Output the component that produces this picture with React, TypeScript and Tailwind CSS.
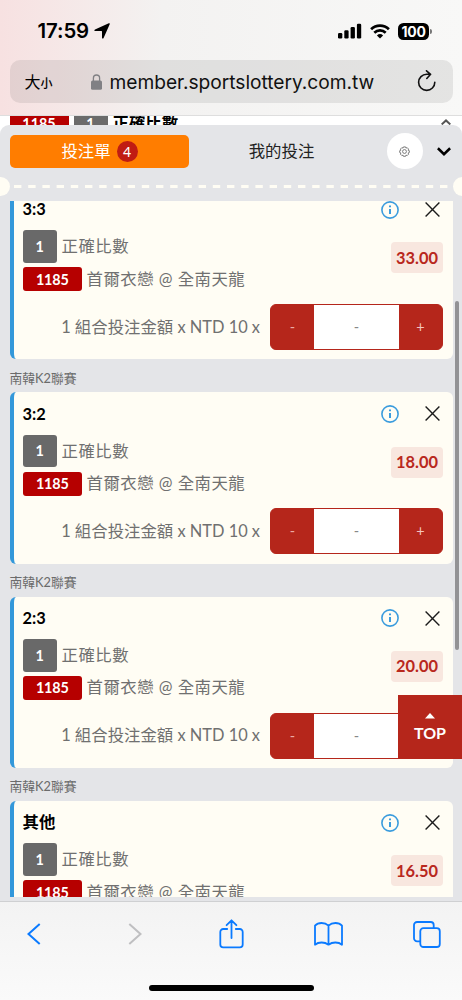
import type { ReactNode } from "react";

type Bet = {
  id: string;
  score: string;
  odds: string;
};

const bets: Bet[] = [
  { id: "a", score: "3:3", odds: "33.00" },
  { id: "b", score: "3:2", odds: "18.00" },
  { id: "c", score: "2:3", odds: "20.00" },
  { id: "d", score: "其他", odds: "16.50" },
];

export default function App() {
  return (
    <div className="relative flex h-[1000px] w-[462px] flex-col overflow-hidden bg-white font-['Lato','Noto_Sans_CJK_TC',sans-serif] text-black">
      <BrowserHeader />
      <div className="flex h-[785px] shrink-0 flex-col bg-white">
        <PageStrip />
        <section className="flex h-[776px] flex-col rounded-t-[9px] bg-[#e4e5e8]">
          <SlipTabs />
          <Perforation />
          <div className="h-[696px] overflow-hidden px-[9.5px]">
            <div className="-mt-[13.2px]">
              {bets.map((bet, index) => (
                <div key={bet.id}>
                  {index > 0 && (
                    <p className="flex h-[33px] items-center pt-[5px] text-[12.8px] text-[#6b6b6b]">
                      南韓K2聯賽
                    </p>
                  )}
                  <BetCard bet={bet} />
                </div>
              ))}
            </div>
          </div>
        </section>
      </div>
      <BrowserToolbar />

      <div className="absolute top-[301px] left-[455px] h-[349px] w-[4px] rounded-full bg-[#929295]" />
      <button
        type="button"
        className="absolute top-[695px] right-0 flex h-16 w-16 flex-col items-center bg-[#b5261b] pt-[18px] text-white"
      >
        <svg viewBox="0 0 10 6" className="h-[6px] w-[10px] fill-current">
          <path d="M5 0 10 5.5H0Z" />
        </svg>
        <span className="mt-[3px] text-[16px] leading-[22px] font-bold">TOP</span>
      </button>
    </div>
  );
}

function BrowserHeader() {
  return (
    <header className="h-[116px] shrink-0 border-b border-[#dedede] bg-linear-to-r from-[#f7e1e1] via-[#f3f2f1] via-35% to-[#f8f8f7] px-[9.5px] font-['Inter','Noto_Sans_CJK_TC',sans-serif]">
      <div className="flex h-[60px] items-center justify-between pt-[2px] pr-[21px] pl-[28px]">
        <div className="flex items-center gap-[5px]">
          <span className="text-[20.4px] leading-6 font-semibold tracking-[-0.1px]">17:59</span>
          <svg viewBox="0 0 16 16" className="size-4 fill-current">
            <path d="M15.7 1.2 9.6 15c-.4.9-1.6.8-1.6-.3V8.4l-.4-.4H1.3C.2 8 .1 6.8 1 6.4L14.8.3c.7-.3 1.2.2.9.9Z" />
          </svg>
        </div>
        <div className="flex items-center">
          <svg viewBox="0 0 24 16" className="h-4 w-6 fill-current">
            <rect x="0" y="10" width="4.3" height="5.5" rx="1.2" />
            <rect x="6.3" y="7.3" width="4.3" height="8.2" rx="1.2" />
            <rect x="12.6" y="4" width="4.3" height="11.5" rx="1.2" />
            <rect x="18.9" y="0.7" width="4.3" height="14.8" rx="1.2" />
          </svg>
          <svg viewBox="0 0 20 15" className="ml-2 h-[15px] w-5 fill-none stroke-current stroke-[2.7]">
            <path d="M1.1 5.2a12.8 12.8 0 0 1 17.8 0M4.3 8.7a8.2 8.2 0 0 1 11.4 0" />
            <path d="m10 14.5-3.1-3.1a4.5 4.5 0 0 1 6.2 0Z" className="fill-current stroke-none" />
          </svg>
          <span className="ml-[8px] flex h-[17px] w-[30.5px] items-center justify-center rounded-[5.5px] bg-black text-[14px] font-bold tracking-[-0.2px] text-white">
            100
          </span>
          <span className="ml-[1px] h-[5px] w-[1.6px] rounded-r-full bg-[#777]" />
        </div>
      </div>
      <div className="flex h-[43px] items-center rounded-[10px] bg-black/8 pr-[16px] pl-[15px]">
        <span className="flex w-[66px] items-baseline">
          <span className="text-[16px]">大</span>
          <span className="text-[12px] font-medium">小</span>
        </span>
        <svg viewBox="0 0 11 16" className="h-4 w-[11px]">
          <path d="M2.4 7V4.1a3.1 3.1 0 0 1 6.2 0V7" className="fill-none stroke-[#808084] stroke-[1.3]" />
          <rect y="6.6" width="11" height="9.2" rx="1.6" className="fill-[#808084]" />
        </svg>
        <span className="ml-[8px] pt-[2px] text-[19.2px] tracking-[-0.04px] whitespace-nowrap text-[#111]">
          member.sportslottery.com.tw
        </span>
        <svg
          viewBox="0 0 20 23"
          className="ml-auto h-[23px] w-5 shrink-0 fill-none stroke-[#111] stroke-[1.6]"
          strokeLinecap="round"
          strokeLinejoin="round"
        >
          <path d="M17.8 12.3a8.1 8.1 0 1 1-8.1-8.1h3.8M9.5.8 13.6 4.3 9.8 8.5" />
        </svg>
      </div>
    </header>
  );
}

function PageStrip() {
  return (
    <div className="flex h-[9px] shrink-0 overflow-hidden bg-white pl-[9.5px] text-[16.4px] font-bold">
      <span className="h-6 w-[59px] bg-[#b60000] text-center text-[14.4px] leading-[15px] text-white">1185</span>
      <span className="ml-[5px] h-6 w-[34px] bg-[#6b6b6b] text-center text-[14.4px] leading-[15px] text-white">1</span>
      <span className="ml-[5px] leading-[14px]">正確比數</span>
      <svg viewBox="0 0 10 6" className="mt-[3px] mr-[11px] ml-auto h-[6px] w-[10px] fill-none stroke-[#555] stroke-2">
        <path d="m.7 5.4 4.3-4 4.3 4" />
      </svg>
    </div>
  );
}

function SlipTabs() {
  return (
    <nav className="flex h-[52px] shrink-0 items-center pl-[9.5px] text-[16.4px]">
      <button
        type="button"
        className="flex h-[33px] w-[179px] items-center justify-center rounded-[5px] bg-[#ff7d00] text-white"
      >
        <span className="ml-[1px]">投注單</span>
        <span className="ml-[6px] flex size-[21px] items-center justify-center rounded-full bg-[#c01c13] font-['Noto_Sans'] text-[14px]">
          4
        </span>
      </button>
      <button type="button" className="w-[186px] text-center text-[#222]">
        我的投注
      </button>
      <span className="ml-[12px] flex size-[36px] items-center justify-center rounded-full bg-white">
        <svg viewBox="0 0 24 24" className="size-[11px] fill-none stroke-[#666] stroke-[1.8]" strokeLinejoin="round">
          <path d="m9.7 2 4.6 0 .9 2.6 2.6-1 3.1 3.1-1 2.6 2.6.9v4l-2.6 1 1 2.6-3.1 3.1-2.6-1-.9 2.6H9.7l-.9-2.6-2.6 1-3.1-3.1 1-2.6-2.6-1v-4l2.6-.9-1-2.6 3.1-3.1 2.6 1Z" />
          <circle cx="12" cy="12" r="4.2" />
        </svg>
      </span>
      <svg viewBox="0 0 14 9" className="ml-[14px] h-[9px] w-[14px] fill-none stroke-black stroke-[2.6]">
        <path d="m.9 1.3 6.1 5.8 6.1-5.8" />
      </svg>
    </nav>
  );
}

function Perforation() {
  return (
    <div className="flex h-[24px] shrink-0 items-start justify-between overflow-hidden">
      <span className="-ml-[9.5px] size-[19px] shrink-0 rounded-full bg-[#fffdf4]" />
      <svg className="mt-[8px] h-[3px] w-[434px]">
        <path d="M0 1.5H434" stroke="#fffdf4" strokeWidth="3" strokeDasharray="7.4 6.8" />
      </svg>
      <span className="-mr-[9.5px] size-[19px] shrink-0 rounded-full bg-[#fffdf4]" />
    </div>
  );
}

function BetCard({ bet }: { bet: Bet }) {
  return (
    <article className="h-[171.4px] rounded-[6px] border-l-[4px] border-[#3398da] bg-[#fffdf4] pr-[9.5px] pl-[9px]">
      <div className="flex h-[42.5px] items-center justify-between pt-[1px]">
        <h3 className="text-[16.4px] font-bold">{bet.score}</h3>
        <div className="flex items-center gap-[26px] pr-[3px]">
          <InfoIcon />
          <CloseIcon />
        </div>
      </div>
      <div className="flex justify-between">
        <div className="text-[16.4px] tracking-[0.5px] text-[#707070]">
          <Line>
            <span className="flex h-[32.5px] w-[34.5px] items-center justify-center rounded-[3px] bg-[#696969] text-[14.4px] font-bold tracking-normal text-white">
              1
            </span>
            <span>正確比數</span>
          </Line>
          <div className="h-[4.5px]" />
          <Line>
            <span className="flex h-[24px] w-[59.5px] items-center justify-center rounded-[3px] bg-[#b60000] text-[14.4px] font-bold tracking-[-0.2px] text-white">
              1185
            </span>
            <span className="-mt-px">首爾衣戀 @ 全南天龍</span>
          </Line>
        </div>
        <span className="mt-[12px] flex h-[31px] w-[52px] items-center justify-center rounded-[4px] bg-[#f8e7df] text-[16.4px] font-bold text-[#b9281d]">
          {bet.odds}
        </span>
      </div>
      <div className="mt-[12.6px] flex items-center justify-end gap-[10px] text-[16.4px] text-[#707070]">
        <span>1 組合投注金額 x NTD 10 x</span>
        <Stepper />
      </div>
    </article>
  );
}

function Line({ children }: { children: ReactNode }) {
  return <div className="flex items-center gap-[4.5px] whitespace-nowrap">{children}</div>;
}

function Stepper() {
  return (
    <div className="flex h-[46px] w-[173px] overflow-hidden rounded-[6px] border border-[#b5261b] bg-[#b5261b] text-[14.5px]">
      <button type="button" className="w-[43px] text-[#eba9a3]">
        -
      </button>
      <span className="flex flex-1 items-center justify-center bg-white text-[#888]">-</span>
      <button type="button" className="w-[43px] text-[#f3c4bf]">
        +
      </button>
    </div>
  );
}

function InfoIcon() {
  return (
    <svg viewBox="0 0 18 18" className="size-[18px] fill-none stroke-[#3b9cdd] stroke-[1.6]">
      <circle cx="9" cy="9" r="8.1" />
      <path d="M9 8v5M9 4.6v1.6" className="stroke-2" />
    </svg>
  );
}

function CloseIcon() {
  return (
    <svg viewBox="0 0 15 15" className="size-[15px] fill-none stroke-[#1c1c1c] stroke-[1.4]">
      <path d="m.6.6 13.8 13.8M14.4.6.6 14.4" />
    </svg>
  );
}

function BrowserToolbar() {
  return (
    <footer className="flex h-[99px] shrink-0 flex-col items-center justify-between border-t border-[#cfd0d2] bg-linear-to-b from-[#f3f3f3] to-[#fafafa] pb-[9px]">
      <div className="flex h-[64px] w-full items-center pl-[27px] text-[#0a7aff]">
        <svg viewBox="0 0 14 22" className="h-[22px] w-[14px] fill-none stroke-current stroke-2">
          <path d="M12.7 1 1.5 11l11.2 10" />
        </svg>
        <svg viewBox="0 0 14 22" className="ml-[87px] h-[22px] w-[14px] fill-none stroke-[#bfbfc1] stroke-2">
          <path d="m1.3 1 11.2 10L1.3 21" />
        </svg>
        <svg
          viewBox="0 0 25 30"
          className="ml-[77px] h-[30px] w-[25px] fill-none stroke-current stroke-[1.8]"
          strokeLinecap="round"
          strokeLinejoin="round"
        >
          <path d="M8.2 10H4.2A2.9 2.9 0 0 0 1.3 12.9v12.6a2.9 2.9 0 0 0 2.9 2.9h16.6a2.9 2.9 0 0 0 2.9-2.9V12.9a2.9 2.9 0 0 0-2.9-2.9h-4M12.5 19V1.3M7.6 6.2l4.9-4.9 4.9 4.9" />
        </svg>
        <svg
          viewBox="0 0 29 24"
          className="ml-[70px] h-[24px] w-[29px] fill-none stroke-current stroke-[1.8]"
          strokeLinejoin="round"
        >
          <path d="M14.5 3.7C12.6 1.9 10.3 1 7.6 1 5 1 2.6 1.9 1 3.7v19c1.7-1.4 4-2.2 6.6-2.2 2.7 0 5 .8 6.9 2.2 1.9-1.4 4.2-2.2 6.9-2.2 2.6 0 4.9.8 6.6 2.2v-19C26.4 1.9 24 1 21.4 1c-2.7 0-5 .9-6.9 2.7Zm0 0v19" />
        </svg>
        <svg viewBox="0 0 28 27" className="ml-[69.5px] h-[27px] w-[28px] fill-none stroke-current stroke-[1.8]">
          <path d="M7.3 20.3H4.1A3.1 3.1 0 0 1 1 17.2V4.1A3.1 3.1 0 0 1 4.1 1h13.5a3.1 3.1 0 0 1 3.1 3.1v3.1" />
          <rect x="7.3" y="7.2" width="19.5" height="18.8" rx="3.1" />
        </svg>
      </div>
      <div className="h-[6px] w-[165px] rounded-full bg-black" />
    </footer>
  );
}
